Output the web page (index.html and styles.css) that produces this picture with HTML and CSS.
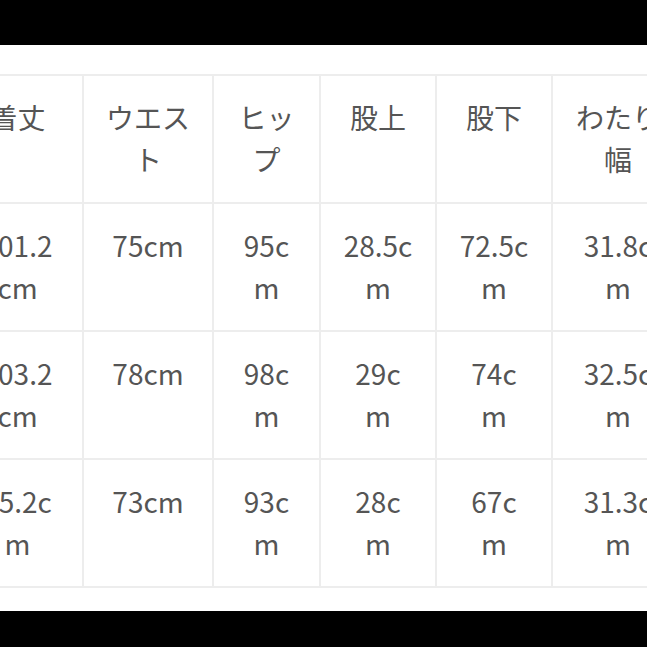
FILE: index.html
```html
<!DOCTYPE html>
<html lang="ja">
<head>
<meta charset="utf-8">
<link rel="stylesheet" href="styles.css">
</head>
<body>
<div class="screen">
  <div class="bar bar-top"></div>
  <div class="content">
    <table class="size-table">
      <colgroup>
        <col class="c1"><col class="c2"><col class="c3"><col class="c4"><col class="c5"><col class="c6">
      </colgroup>
      <tr>
        <td>着丈</td><td>ウエス<br>ト</td><td>ヒッ<br>プ</td><td>股上</td><td>股下</td><td>わたり<br>幅</td>
      </tr>
      <tr>
        <td>101.2<br>cm</td><td>75cm</td><td>95c<br>m</td><td>28.5c<br>m</td><td>72.5c<br>m</td><td>31.8c<br>m</td>
      </tr>
      <tr>
        <td>103.2<br>cm</td><td>78cm</td><td>98c<br>m</td><td>29c<br>m</td><td>74c<br>m</td><td>32.5c<br>m</td>
      </tr>
      <tr>
        <td>95.2c<br>m</td><td>73cm</td><td>93c<br>m</td><td>28c<br>m</td><td>67c<br>m</td><td>31.3c<br>m</td>
      </tr>
    </table>
  </div>
  <div class="bar bar-bottom"></div>
</div>
</body>
</html>
```

FILE: styles.css
```css
html, body {
  margin: 0;
  padding: 0;
  background: #ffffff;
}

.screen {
  width: 647px;
  height: 647px;
  overflow: hidden;
  display: flex;
  flex-direction: column;
}

.bar {
  background: #000000;
  flex: none;
}

.bar-top {
  height: 45px;
}

.bar-bottom {
  height: 36px;
  margin-top: auto;
}

.content {
  flex: 1;
  background: #ffffff;
  padding-top: 29px;
  overflow: hidden;
}

.size-table {
  margin-left: -49px;
  width: 732px;
  table-layout: fixed;
  border-collapse: collapse;
  font-family: "Noto Sans CJK JP", "Noto Sans", sans-serif;
  font-size: 28px;
  line-height: 42px;
  color: #555555;
}

.c1 { width: 131px; }
.c2 { width: 130px; }
.c3 { width: 107px; }
.c4 { width: 116px; }
.c5 { width: 116px; }
.c6 { width: 132px; }

.size-table td {
  border: 2px solid #ededed;
  height: 128px;
  box-sizing: border-box;
  padding: 20px 4px 0;
  text-align: center;
  vertical-align: top;
  white-space: nowrap;
}
```
